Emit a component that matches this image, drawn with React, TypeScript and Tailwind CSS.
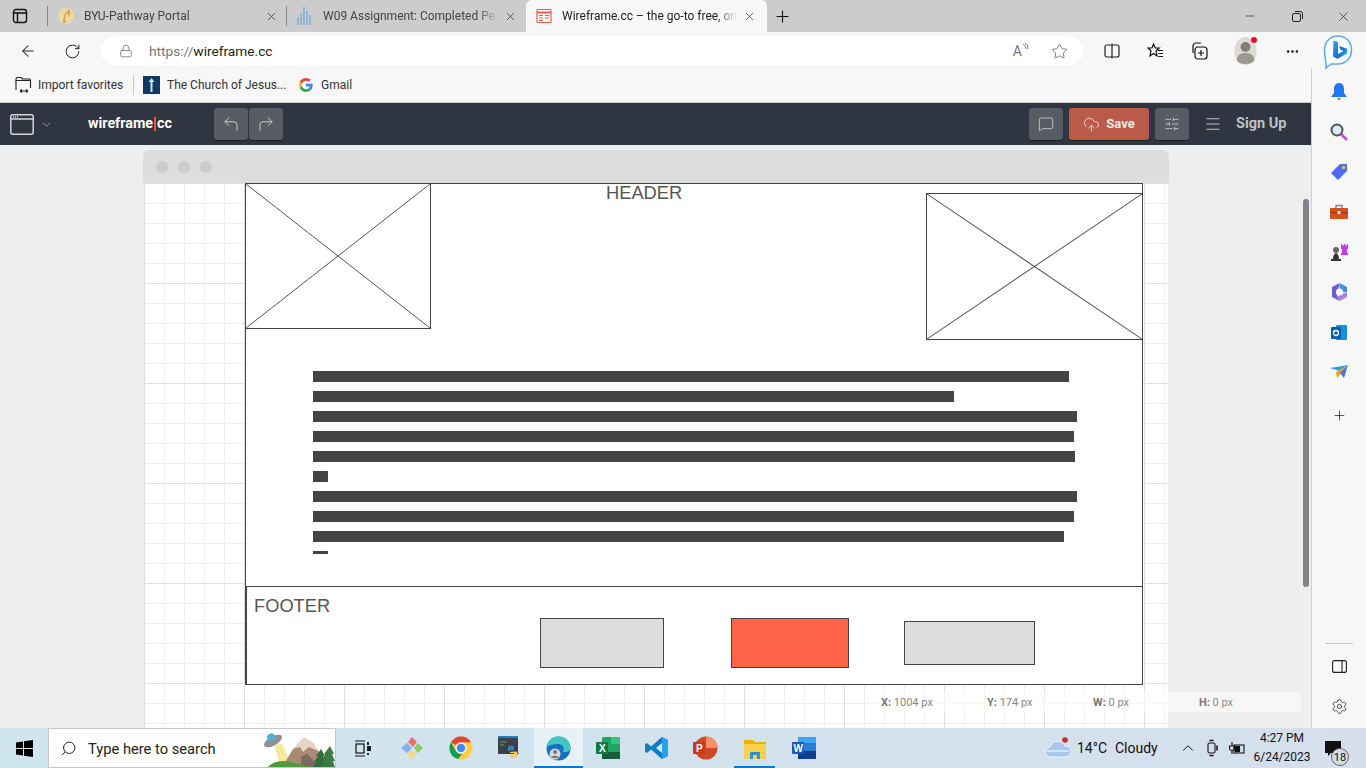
import React from "react";
import {
  ArrowLeft,
  ChevronDown,
  ChevronUp,
  CloudUpload,
  CornerUpLeft,
  CornerUpRight,
  Lock,
  Menu,
  MessageSquare,
  Minus,
  MoreHorizontal,
  Plus,
  RotateCw,
  Search,
  Settings,
  SlidersHorizontal,
  Star,
  X,
} from "lucide-react";

function Tab({ icon, title, className, active }: { icon: React.ReactNode; title: string; className: string; active?: boolean }) {
  return (
    <div className={`flex h-[32px] items-center pl-[10px] ${className}`}>
      <div className="flex w-[16px] shrink-0 justify-center">{icon}</div>
      <span className={`ml-[10px] w-[175px] overflow-hidden whitespace-nowrap text-[12px] [mask-image:linear-gradient(to_right,#000_88%,transparent)] ${active ? "text-[#222]" : "text-[#444]"}`}>
        {title}
      </span>
      <X size={13} strokeWidth={1.2} className="ml-[6px] shrink-0" />
    </div>
  );
}

function TabBar() {
  return (
    <div className="flex h-[32px] shrink-0 items-center bg-[#cccccc] text-[#222]">
      <div className="flex w-[47px] justify-center pr-[7px]">
        <svg width="16" height="16" viewBox="0 0 16 16" fill="none" stroke="#111" strokeWidth="1.4">
          <rect x="1.5" y="1.5" width="13" height="13" rx="2.5" />
          <path d="M1.5 5h13M5.500 5v9.500" />
        </svg>
      </div>
      <div className="h-[20px] w-px bg-[#888]" />
      <Tab
        title="BYU-Pathway Portal"
        className="w-[238px]"
        icon={
          <svg width="16" height="18" viewBox="0 0 16 18">
            <circle cx="8" cy="9" r="8" fill="#ecd9a8" />
            <path d="M5 16C5 10 7 5 11 2c2 3 2 6-1 8 0-2 0-3-1-4-2 3-2 7-1 10z" fill="#d9ab5c" />
          </svg>
        }
      />
      <div className="h-[20px] w-px bg-[#888]" />
      <Tab
        title="W09 Assignment: Completed Per"
        className="w-[239px]"
        icon={
          <svg width="16" height="18" viewBox="0 0 16 18" fill="#8fb4d4">
            <rect x="0" y="10" width="2" height="8" />
            <rect x="3" y="6" width="2" height="12" />
            <rect x="6" y="0" width="2" height="18" />
            <rect x="9" y="4" width="2" height="14" />
            <rect x="12" y="8" width="2" height="10" />
          </svg>
        }
      />
      <Tab
        active
        title="Wireframe.cc – the go-to free, on"
        className="w-[241px] rounded-t-md bg-[#f7f7f7]"
        icon={
          <svg width="16" height="16" viewBox="0 0 16 16" fill="none" stroke="#e8623f" strokeWidth="1.2">
            <rect x="1" y="1.500" width="14" height="13" rx="1" fill="#fff" />
            <path d="M1 4.500h14" strokeWidth="2" />
            <path d="M3 7.500h4M3 10h4M3 12.500h4M9 7.500h4M9 10h4" />
          </svg>
        }
      />
      <Plus size={19} strokeWidth={1.4} className="ml-[6px] text-[#111]" />
      <div className="ml-auto flex items-center text-[#222]">
        <div className="flex w-[49px] justify-center">
          <Minus size={14} strokeWidth={1.2} />
        </div>
        <div className="flex w-[47px] justify-center">
          <svg width="11" height="11" viewBox="0 0 11 11" fill="none" stroke="#222">
            <rect x="0.500" y="2.500" width="8" height="8" rx="1.500" />
            <path d="M3 0.500h5.500a2 2 0 0 1 2 2V8" />
          </svg>
        </div>
        <div className="flex w-[45px] justify-center">
          <X size={15} strokeWidth={1.1} />
        </div>
      </div>
    </div>
  );
}

function AddressBar() {
  return (
    <div className="relative flex h-[36px] shrink-0 items-center bg-[#f7f7f7] pl-[19px] pt-[2px]">
      <ArrowLeft size={18} strokeWidth={1.4} className="text-[#222]" />
      <RotateCw size={17} strokeWidth={1.4} className="ml-[27px] text-[#222]" />
      <div className="ml-[19px] flex h-[30px] w-[984px] items-center rounded-full bg-white pl-[19px] shadow-[0_0_1px_#ddd]">
        <Lock size={14} strokeWidth={1.3} className="text-[#666]" />
        <span className="ml-[16px] text-[13.700px] text-[#222]">
          <span className="text-[#777]">https://</span>wireframe.cc
        </span>
        <span className="ml-auto text-[14px] text-[#777]">A</span>
        <svg width="7" height="10" viewBox="0 0 7 10" fill="none" stroke="#777" className="mb-[6px]">
          <path d="M1 1c2 1 3 3 3 5M3 0c2 1 3 3 3 6" />
        </svg>
        <Star size={17} strokeWidth={1.2} className="ml-[22px] mr-[16px] text-[#666]" />
      </div>
      <svg width="16" height="16" viewBox="0 0 16 16" fill="none" stroke="#222" strokeWidth="1.2" className="ml-[20px]">
        <rect x="1" y="2" width="14" height="12" rx="2" />
        <path d="M8 0.500v15" />
      </svg>
      <svg width="17" height="17" viewBox="0 0 17 17" fill="none" stroke="#111" strokeWidth="1.2" className="ml-[27px]">
        <path d="M6.500 1l1.700 4h4L9 8l1 5-3.500-2.500L3 13l1-5-3-3h4z" />
        <path d="M11 7.500h5M11.500 10.500h4.500M11.500 13.500h4.500" />
      </svg>
      <svg width="17" height="18" viewBox="0 0 17 18" fill="none" stroke="#111" strokeWidth="1.2" className="ml-[27px]">
        <path d="M2 11V4a3 3 0 0 1 3-3h5" />
        <rect x="4" y="5" width="12" height="12" rx="3" fill="#f7f7f7" />
        <path d="M10 8v6M7 11h6" />
      </svg>
      <svg width="24" height="30" viewBox="0 0 24 30" className="ml-[26px]">
        <ellipse cx="11.500" cy="15" rx="11" ry="14" fill="#dddbd8" />
        <circle cx="11.500" cy="11" r="5" fill="#827d78" />
        <path d="M2.500 24c1-6 5-7 9-7s8 1 9 7c-2 3-5 4-9 4s-7-1-9-4z" fill="#9b9792" />
        <circle cx="20" cy="4" r="3" fill="#e81123" />
      </svg>
      <MoreHorizontal size={15} strokeWidth={2} className="ml-[27px] text-[#111]" />
      <svg width="30" height="38" viewBox="0 0 30 38" className="absolute left-[1323px] top-[2px]">
        <defs>
          <linearGradient id="bing-b" x1="0" y1="0" x2="1" y2="1">
            <stop offset="0" stopColor="#2aa4f0" />
            <stop offset="0.600" stopColor="#1b6fd8" />
            <stop offset="1" stopColor="#35c8e8" />
          </linearGradient>
        </defs>
        <path d="M15 2c8 0 13.500 6 13.500 14S23 30 15 30H8l-5 4c1-4-1.500-9-1.500-18C1.500 8 7 2 15 2z" fill="#fff" stroke="#59a9ee" strokeWidth="1.500" />
        <path d="M10.500 6.500l4.500 1.600v12l5.500-3-3-1.300-1.500-4 8 3v4.700l-9.500 5.500-4.500-2.500z" fill="url(#bing-b)" />
      </svg>
    </div>
  );
}

function Favorites() {
  return (
    <div className="flex h-[35px] shrink-0 items-center border-b border-[#c9c9c9] bg-[#f7f7f7] pb-px pl-[14px] text-[12px] text-[#333]">
      <svg width="18" height="17" viewBox="0 0 18 17" fill="none" stroke="#222" strokeWidth="1.1">
        <path d="M2 14V3a1.500 1.500 0 0 1 1.500-1.500H7l1.500 1.500H15a1.500 1.500 0 0 1 1.500 1.500V12" />
        <path d="M1.500 4.500h15M6 15h8M6 15l2-1.500M6 15l2 1.500M14 15l-2-1.500M14 15l-2 1.500" />
      </svg>
      <span className="ml-[6px] w-[85px] whitespace-nowrap">Import favorites</span>
      <div className="ml-[10px] h-[20px] w-px bg-[#c8c8c8]" />
      <svg width="17" height="18" viewBox="0 0 17 18" className="ml-[9px]">
        <rect width="17" height="18" fill="#123a5e" />
        <path d="M8.500 2l3 4h-2v10h-2V6h-2z" fill="#cfe2f0" />
      </svg>
      <span className="ml-[7px] w-[118px] whitespace-nowrap">The Church of Jesus...</span>
      <svg width="14" height="14" viewBox="0 0 48 48" className="ml-[14px]">
        <path fill="#EA4335" d="M24 9.500c3.500 0 6.700 1.300 9.100 3.500l6.800-6.800C35.800 2.400 30.300 0 24 0 14.600 0 6.500 5.400 2.600 13.200l7.900 6.100C12.400 13.700 17.700 9.500 24 9.500z" />
        <path fill="#4285F4" d="M46.900 24.500c0-1.600-.1-3.100-.4-4.500H24v9h12.900c-.6 3-2.200 5.500-4.700 7.200l7.600 5.900c4.400-4.100 7.100-10.100 7.100-17.600z" />
        <path fill="#FBBC05" d="M10.500 28.700c-.5-1.400-.8-3-.8-4.700s.3-3.300.8-4.700l-7.900-6.100C.9 16.500 0 20.100 0 24s.9 7.500 2.600 10.800z" />
        <path fill="#34A853" d="M24 48c6.500 0 11.900-2.100 15.900-5.900l-7.600-5.900c-2.100 1.400-4.900 2.300-8.300 2.300-6.300 0-11.600-4.200-13.500-9.800l-7.900 6.100C6.500 42.600 14.600 48 24 48z" />
      </svg>
      <span className="ml-[8px]">Gmail</span>
    </div>
  );
}

function ToolButton({ children, className }: { children: React.ReactNode; className?: string }) {
  return (
    <div className={`flex h-[32px] w-[34px] items-center justify-center rounded-[3px] bg-[#575b64] text-[#d5d6d9] shadow-[0_1px_0_#1d2028] ${className ?? ""}`}>
      {children}
    </div>
  );
}

function AppBar() {
  return (
    <div className="flex h-[42px] shrink-0 items-center bg-[#2f3541] pl-[10px] text-white">
      <svg width="24" height="21" viewBox="0 0 24 21" fill="none" stroke="#d5d6d9" strokeWidth="1.500">
        <rect x="0.800" y="0.800" width="22.400" height="19.400" rx="2" />
        <path d="M0.800 5h22.400" />
        <path d="M3 3h1M5 3h1M7 3h1" />
      </svg>
      <ChevronDown size={13} strokeWidth={1.2} className="ml-[6px] text-[#c5c7cb]" />
      <div className="ml-[35px] flex w-[86px] items-center whitespace-nowrap text-[14.300px] font-bold">
        wireframe
        <span className="mx-px h-[14px] w-[2px] bg-[#e8593f]" />
        cc
      </div>
      <div className="ml-[40px] flex gap-px">
        <ToolButton>
          <CornerUpLeft size={18} strokeWidth={1.2} />
        </ToolButton>
        <ToolButton>
          <CornerUpRight size={18} strokeWidth={1.2} />
        </ToolButton>
      </div>
      <ToolButton className="ml-auto">
        <MessageSquare size={16} strokeWidth={1.2} />
      </ToolButton>
      <div className="ml-[6px] flex h-[32px] w-[80px] items-center justify-center gap-[6px] rounded-[3px] bg-[#b95a4b] text-[13px] font-bold text-[#f4e7e4] shadow-[0_1px_0_#1d2028]">
        <CloudUpload size={17} strokeWidth={1.2} />
        Save
      </div>
      <ToolButton className="ml-[6px]">
        <SlidersHorizontal size={16} strokeWidth={1.2} />
      </ToolButton>
      <Menu size={18} strokeWidth={1.3} className="ml-[15px] text-[#c5c7cb]" />
      <span className="ml-[14px] mr-[23px] w-[52px] whitespace-nowrap text-[14.500px] font-bold text-[#bfc1c6]">Sign Up</span>
    </div>
  );
}

function Placeholder({ className }: { className: string }) {
  return (
    <div className={`absolute border border-[#444] bg-white ${className}`}>
      <svg className="h-full w-full" viewBox="0 0 100 100" preserveAspectRatio="none" stroke="#555" strokeWidth="1" fill="none">
        <path d="M0 0L100 100M100 0L0 100" vectorEffect="non-scaling-stroke" />
      </svg>
    </div>
  );
}

function Wireframe() {
  return (
    <div className="ml-[143px] mt-[5px] w-[1026px]">
      <div className="flex h-[33px] items-center gap-[10px] rounded-t-md bg-[#dddddd] pl-[13px]">
        <div className="h-[12px] w-[12px] rounded-full bg-[#cccccc]" />
        <div className="h-[12px] w-[12px] rounded-full bg-[#cccccc]" />
        <div className="h-[12px] w-[12px] rounded-full bg-[#cccccc]" />
      </div>
      <div className="relative ml-px h-[560px] w-[1024px] bg-white bg-[linear-gradient(to_right,#e0e0e0_1px,transparent_1px),linear-gradient(to_bottom,#e0e0e0_1px,transparent_1px),linear-gradient(to_right,#eeeeee_1px,transparent_1px),linear-gradient(to_bottom,#eeeeee_1px,transparent_1px)] bg-[size:100px_100px,100px_100px,20px_20px,20px_20px]">
        <div className="absolute left-[101px] top-0 h-[502px] w-[898px] border border-[#444] bg-white" />
        <span className="absolute left-[462px] top-[-1px] font-['Liberation_Sans',sans-serif] text-[18.300px] leading-[22px] text-[#555]">
          HEADER
        </span>
        <Placeholder className="left-[101px] top-0 h-[146px] w-[186px]" />
        <Placeholder className="left-[782px] top-[10px] h-[147px] w-[217px]" />
        <div className="absolute left-[169px] top-[188px] flex flex-col gap-[9px]">
          <div className="h-[11px] w-[756px] bg-[#444]" />
          <div className="h-[11px] w-[641px] bg-[#444]" />
          <div className="h-[11px] w-[764px] bg-[#444]" />
          <div className="h-[11px] w-[761px] bg-[#444]" />
          <div className="h-[11px] w-[762px] bg-[#444]" />
          <div className="h-[11px] w-[15px] bg-[#444]" />
          <div className="h-[11px] w-[764px] bg-[#444]" />
          <div className="h-[11px] w-[761px] bg-[#444]" />
          <div className="h-[11px] w-[751px] bg-[#444]" />
          <div className="h-[3px] w-[15px] bg-[#444]" />
        </div>
        <div className="absolute left-[102px] top-[403px] h-[99px] w-[897px] border border-[#444] bg-white" />
        <span className="absolute left-[110px] top-[412px] font-['Liberation_Sans',sans-serif] text-[18.300px] leading-[22px] text-[#555]">
          FOOTER
        </span>
        <div className="absolute left-[396px] top-[435px] h-[50px] w-[124px] border border-[#444] bg-[#dddddd]" />
        <div className="absolute left-[587px] top-[435px] h-[50px] w-[118px] border border-[#444] bg-[#ff6347]" />
        <div className="absolute left-[760px] top-[438px] h-[44px] w-[131px] border border-[#444] bg-[#dddddd]" />
      </div>
    </div>
  );
}

function StatusItem({ label, value }: { label: string; value: string }) {
  return (
    <div className="w-[106px] pl-[12px] pt-[2px] text-[11px] text-[#888]">
      <span className="font-bold text-[#777]">{label}</span> {value}
    </div>
  );
}

function Sidebar() {
  return (
    <div className="flex w-[55px] shrink-0 flex-col items-center border-l border-[#cfcfcf] bg-[#f7f7f7] pt-[4px]">
      <div className="flex h-[40px] items-center">
        <svg width="16" height="18" viewBox="0 0 16 18">
          <path d="M8 0c3.500 0 5 3 5 6v4l3 4H0l3-4V6c0-3 1.500-6 5-6z" fill="#1e79ee" />
          <path d="M6 15h4l-2 2.500z" fill="#777" />
        </svg>
      </div>
      <div className="flex h-[40px] items-center">
        <svg width="18" height="18" viewBox="0 0 18 18">
          <path d="M11 11l6 6" stroke="#c74bd8" strokeWidth="2.500" />
          <circle cx="7" cy="7" r="5.500" fill="#d7ecf8" stroke="#555" strokeWidth="2" />
        </svg>
      </div>
      <div className="flex h-[40px] items-center">
        <svg width="18" height="18" viewBox="0 0 18 18">
          <path d="M10 1h7v7l-9 9-7-7z" fill="#4d6af0" />
          <circle cx="13.500" cy="4.500" r="1.800" fill="#f3c53c" />
        </svg>
      </div>
      <div className="flex h-[40px] items-center">
        <svg width="18" height="16" viewBox="0 0 18 16">
          <path d="M6 4V1.500h6V4" fill="none" stroke="#888" strokeWidth="1.500" />
          <rect y="4" width="18" height="11" rx="1" fill="#d4501f" />
          <rect y="8" width="18" height="1.200" fill="#9c3a15" />
          <rect x="7.500" y="7" width="3" height="3" fill="#ddd" />
        </svg>
      </div>
      <div className="flex h-[40px] items-center">
        <svg width="18" height="18" viewBox="0 0 18 18">
          <circle cx="6" cy="7" r="3" fill="#666" />
          <path d="M3 16c0-3 1-5 3-6 2 1 3 3 3 6h2v2H1v-2z" fill="#333" />
          <path d="M11 1h1.500v1.500H14V1h1.500v1.500H17V1h1v5h-1v4h1v2h-7v-2h1V6h-1z" fill="#c23ee8" />
        </svg>
      </div>
      <div className="flex h-[40px] items-center">
        <svg width="17" height="18" viewBox="0 0 17 18">
          <path d="M8.500 0L16 4v5H8.500z" fill="#3f8ed8" />
          <path d="M16 9v5l-7.500 4L6 13z" fill="#a980dc" />
          <path d="M1 4l7.500-4L6 13l2.500 5L1 14z" fill="#6a5ed0" />
          <circle cx="8.500" cy="9" r="3.500" fill="#fff" />
        </svg>
      </div>
      <div className="flex h-[40px] items-center">
        <svg width="17" height="17" viewBox="0 0 17 17">
          <rect x="5" y="1" width="11" height="15" rx="1" fill="#1490df" />
          <rect width="10" height="12" y="3" rx="1" fill="#0a5fb0" />
          <circle cx="5" cy="9" r="2.500" fill="none" stroke="#fff" strokeWidth="1.300" />
        </svg>
      </div>
      <div className="flex h-[40px] items-center">
        <svg width="18" height="14" viewBox="0 0 18 14">
          <path d="M0 3l18-3-8 6z" fill="#2a9fe0" />
          <path d="M18 0L6 7l1 6z" fill="#f3a01c" />
          <path d="M18 0l-4 13-4-5z" fill="#3a7ce0" />
        </svg>
      </div>
      <div className="mt-[3px] flex h-[40px] items-center">
        <Plus size={15} strokeWidth={1.2} className="text-[#222]" />
      </div>
      <div className="mt-auto h-px w-[28px] bg-[#c9c9c9]" />
      <div className="mt-[2px] flex h-[40px] items-center">
        <svg width="15" height="13" viewBox="0 0 15 13" fill="none" stroke="#222" strokeWidth="1.100">
          <rect x="0.600" y="0.600" width="13.800" height="11.800" rx="2" />
          <path d="M10 0.600v11.800" />
        </svg>
      </div>
      <div className="mb-[2px] flex h-[40px] items-center">
        <Settings size={17} strokeWidth={1.1} className="text-[#222]" />
      </div>
    </div>
  );
}

function TaskIcon({ children, active, running }: { children: React.ReactNode; active?: boolean; running?: boolean }) {
  return (
    <div className={`relative flex h-[40px] w-[49px] items-center justify-center ${active ? "bg-[#e6f2f7]" : ""}`}>
      {children}
      {(active || running) && (
        <div className={`absolute bottom-0 h-[2px] bg-[#0b78d0] ${active ? "inset-x-0" : "inset-x-[4px]"}`} />
      )}
    </div>
  );
}

function Taskbar() {
  return (
    <div className="flex h-[40px] shrink-0 items-center bg-[linear-gradient(to_right,#cfe6ef,#d5dfec)] text-[#111]">
      <div className="flex w-[48px] justify-center">
        <svg width="17" height="17" viewBox="0 0 17 17" fill="#000">
          <path d="M0 2.500l7-1v6.500H0zM8 1.300L17 0v8H8zM0 9h7v6.500l-7-1zM8 9h9v8l-9-1.300z" />
        </svg>
      </div>
      <div className="relative flex h-[40px] w-[288px] items-center overflow-hidden border border-[#c4c8cc] bg-white pl-[11px]">
        <Search size={17} strokeWidth={1.300} className="-scale-x-100 text-[#111]" />
        <span className="ml-[11px] whitespace-nowrap pt-[2px] text-[14.700px] text-[#222]">Type here to search</span>
        <svg width="72" height="40" viewBox="0 0 72 40" className="absolute right-0 top-0">
          <path d="M11 16l8-1 8 17-11 1z" fill="#f3ea9c" />
          <ellipse cx="10" cy="12" rx="10" ry="4.500" fill="#8d8f96" transform="rotate(-30 10 12)" />
          <ellipse cx="8" cy="8" rx="4" ry="3.500" fill="#4cb2d8" transform="rotate(-30 8 8)" />
          <path d="M18 40l12-20 11-11 9 5 12 18v8z" fill="#a98a75" />
          <path d="M30 20l11-11 9 5 5 8-9-4-6 5-3-5z" fill="#e6d4c8" />
          <path d="M38 28l6-3 8 8 4 7H38z" fill="#7b6a60" />
          <path d="M3 40c6-8 16-9 24-7s14 3 30 7z" fill="#4f9a3a" />
          <path d="M58 20l4 7h-2l4 6h-2l3 5H50l3-5h-2l4-6h-2z" fill="#2f6d3c" />
          <path d="M67 17l4 8h-2l3 7h-2l2 6H58l3-6h-2l3-7h-1z" fill="#3c7b45" />
        </svg>
      </div>
      <div className="ml-[2px] flex">
        <TaskIcon>
          <svg width="17" height="17" viewBox="0 0 17 17" fill="none" stroke="#111" strokeWidth="1.200">
            <path d="M1 1h10M1 16h10" />
            <rect x="2" y="4" width="8" height="9" />
            <path d="M14 2v3M14 7h2v3h-2zM14 13v2" strokeWidth="1.800" />
          </svg>
        </TaskIcon>
        <TaskIcon>
          <svg width="24" height="24" viewBox="0 0 24 24">
            <path d="M12 1l5 5-4 5-5-5z" fill="#ec7070" />
            <path d="M7 7l5 5-5 5-6-5z" fill="#7fb0f4" />
            <path d="M18 7l5 5-5 5-4-5z" fill="#88cc66" />
            <path d="M12 14l4 4-4 5-5-5z" fill="#f4dc7c" />
          </svg>
        </TaskIcon>
        <TaskIcon>
          <svg width="24" height="24" viewBox="0 0 48 48">
            <circle cx="24" cy="24" r="23" fill="#ffcd40" />
            <path fill="#db4437" d="M24 1a23 23 0 0 1 20 11.500H24a11.500 11.500 0 0 0-10 6L4 12.500A23 23 0 0 1 24 1z" />
            <path fill="#0f9d58" d="M4 12.500l10 18A11.500 11.500 0 0 0 27 35.500L18 46.200A23 23 0 0 1 4 12.500z" />
            <circle cx="24" cy="24" r="11" fill="#fff" />
            <circle cx="24" cy="24" r="8.500" fill="#4285f4" />
          </svg>
        </TaskIcon>
        <TaskIcon>
          <svg width="24" height="24" viewBox="0 0 24 24">
            <rect x="0" y="0" width="20" height="18" fill="#3a4148" />
            <rect x="0" y="0" width="20" height="2" fill="#1f7fc8" />
            <path d="M2 6h7M2 9h4" stroke="#5fa06a" />
            <path d="M10 11c0-2 6-2 6 0v3h-4v1h7c2 0 2 4 0 4h-2v-3h-4v-1h-3z" fill="#3b7fb8" />
            <path d="M12 16h7v4c0 3-7 3-7 0v-1h4v-2h-4z" fill="#f7d148" />
          </svg>
        </TaskIcon>
        <TaskIcon active>
          <svg width="25" height="25" viewBox="0 0 25 25">
            <circle cx="12.500" cy="12.500" r="12" fill="#1b6fc2" />
            <path d="M1 11C2 3 8 .5 12.500 .5 19 .5 24.500 5 24.500 12c0 3-3 4.500-6 4-2 0-2-1-1-2 1-3-1.500-6-5-6C7 8 3 9 1 11z" fill="#3fc9c0" />
            <circle cx="9" cy="18" r="5.500" fill="#d8d8d8" />
            <circle cx="9" cy="16" r="2" fill="#777" />
            <path d="M5 22c1-3 7-3 8 0z" fill="#777" />
          </svg>
        </TaskIcon>
        <TaskIcon>
          <svg width="24" height="24" viewBox="0 0 24 24">
            <rect x="6" y="1" width="18" height="22" rx="1.500" fill="#21a366" />
            <rect x="15" y="1" width="9" height="7" fill="#33c481" />
            <rect x="6" y="16" width="18" height="7" fill="#185c37" />
            <rect x="0" y="6" width="12" height="12" rx="1" fill="#107c41" />
            <text x="3" y="16" fontSize="10" fontWeight="700" fill="#fff" fontFamily="'Liberation Sans', sans-serif">X</text>
          </svg>
        </TaskIcon>
        <TaskIcon>
          <svg width="24" height="24" viewBox="0 0 24 24">
            <path d="M17 1l6 3v16l-6 3L6 13.500 2 17l-2-1.200V8.200L2 7l4 3.500z" fill="#0f7cc4" />
            <path d="M17 1l6 3v16l-6 3z" fill="#27a3ea" />
            <path d="M17 7l-6 5 6 5z" fill="#d2e8f5" />
          </svg>
        </TaskIcon>
        <TaskIcon>
          <svg width="25" height="24" viewBox="0 0 25 24">
            <circle cx="13" cy="12" r="11.500" fill="#d04a27" />
            <path d="M13 .5a11.500 11.500 0 0 1 11.500 11.500H13z" fill="#ff8f6b" />
            <rect x="0" y="6" width="12" height="12" rx="1" fill="#c43e1c" />
            <text x="3" y="16" fontSize="10" fontWeight="700" fill="#fff" fontFamily="'Liberation Sans', sans-serif">P</text>
          </svg>
        </TaskIcon>
        <TaskIcon running>
          <svg width="22" height="22" viewBox="0 0 22 22">
            <path d="M0 3h9l2 2h11v15H0z" fill="#eab308" />
            <rect x="0" y="7" width="22" height="15" fill="#fbd04c" />
            <path d="M6 22v-7h10v7h-3v-4H9v4z" fill="#2f8fd8" />
          </svg>
        </TaskIcon>
        <TaskIcon>
          <svg width="24" height="24" viewBox="0 0 24 24">
            <rect x="6" y="1" width="18" height="22" rx="1.500" fill="#2b7cd3" />
            <rect x="6" y="1" width="18" height="6" fill="#41a5ee" />
            <rect x="6" y="15" width="18" height="8" fill="#103f91" />
            <rect x="0" y="6" width="12" height="12" rx="1" fill="#185abd" />
            <text x="1.500" y="16" fontSize="10" fontWeight="700" fill="#fff" fontFamily="'Liberation Sans', sans-serif">W</text>
          </svg>
        </TaskIcon>
      </div>
      <div className="ml-auto flex w-[321px] items-center">
        <svg width="26" height="22" viewBox="0 0 26 22">
          <path d="M6 20a5 5 0 0 1-1-10 8 8 0 0 1 15-1 5.500 5.500 0 0 1 1 11z" fill="#a9c6ec" stroke="#fff" strokeWidth="0.800" />
          <path d="M2 14h22" stroke="#fff" />
          <circle cx="20" cy="3" r="2.800" fill="#c92a2a" />
        </svg>
        <span className="ml-[6px] w-[38px] whitespace-nowrap text-[14px]">14°C</span>
        <span className="w-[44px] whitespace-nowrap text-[14px]">Cloudy</span>
        <ChevronUp size={18} strokeWidth={1.300} className="ml-[20px]" />
        <svg width="12" height="20" viewBox="0 0 12 20" fill="none" stroke="#111" strokeWidth="1.100" className="ml-[10px]">
          <rect x="1" y="5" width="7" height="10" rx="1.500" />
          <path d="M10 7.500v5M2.500 2.500h4M2.500 17.500h4" strokeWidth="1.500" />
        </svg>
        <svg width="16" height="14" viewBox="0 0 16 14" fill="none" stroke="#111" strokeWidth="1.100" className="ml-[10px]">
          <rect x="5" y="4" width="10" height="8" />
          <rect x="6.500" y="5.500" width="4" height="5" fill="#111" />
          <path d="M3 1v4M0.500 5h5v2a2.500 2.500 0 0 1-5 0zM3 9v4" />
        </svg>
        <div className="ml-[7px] flex w-[60px] flex-col items-center text-[12px] leading-[19px]">
          <span>4:27 PM</span>
          <span>6/24/2023</span>
        </div>
        <div className="relative ml-[13px] h-[40px] w-[25px]">
          <svg width="16" height="16" viewBox="0 0 16 16" className="absolute left-0 top-[13px]">
            <path d="M0 0h16v12H6l-3 3v-3H0z" fill="#111" />
          </svg>
          <div className="absolute left-[6px] top-[20px] flex h-[18px] w-[18px] items-center justify-center rounded-full border border-[#666] bg-[#d4dcea] text-[11px] leading-none">
            18
          </div>
        </div>
      </div>
    </div>
  );
}

export default function App() {
  return (
    <div className="flex h-[768px] w-[1366px] flex-col overflow-hidden bg-[#eeeeee] font-['Roboto','Noto_Sans',sans-serif]">
      <TabBar />
      <AddressBar />
      <div className="flex min-h-0 flex-1">
        <div className="flex min-w-0 flex-1 flex-col">
          <Favorites />
          <AppBar />
          <div className="relative flex-1 overflow-hidden">
            <Wireframe />
            <div className="absolute right-[10px] top-[547px] flex h-[20px] w-[432px] items-center bg-white/50">
              <StatusItem label="X:" value="1004 px" />
              <StatusItem label="Y:" value="174 px" />
              <StatusItem label="W:" value="0 px" />
              <StatusItem label="H:" value="0 px" />
            </div>
            <div className="absolute right-[2px] top-[54px] h-[388px] w-[6px] rounded-full bg-[#7f8287]" />
          </div>
        </div>
        <Sidebar />
      </div>
      <Taskbar />
    </div>
  );
}
